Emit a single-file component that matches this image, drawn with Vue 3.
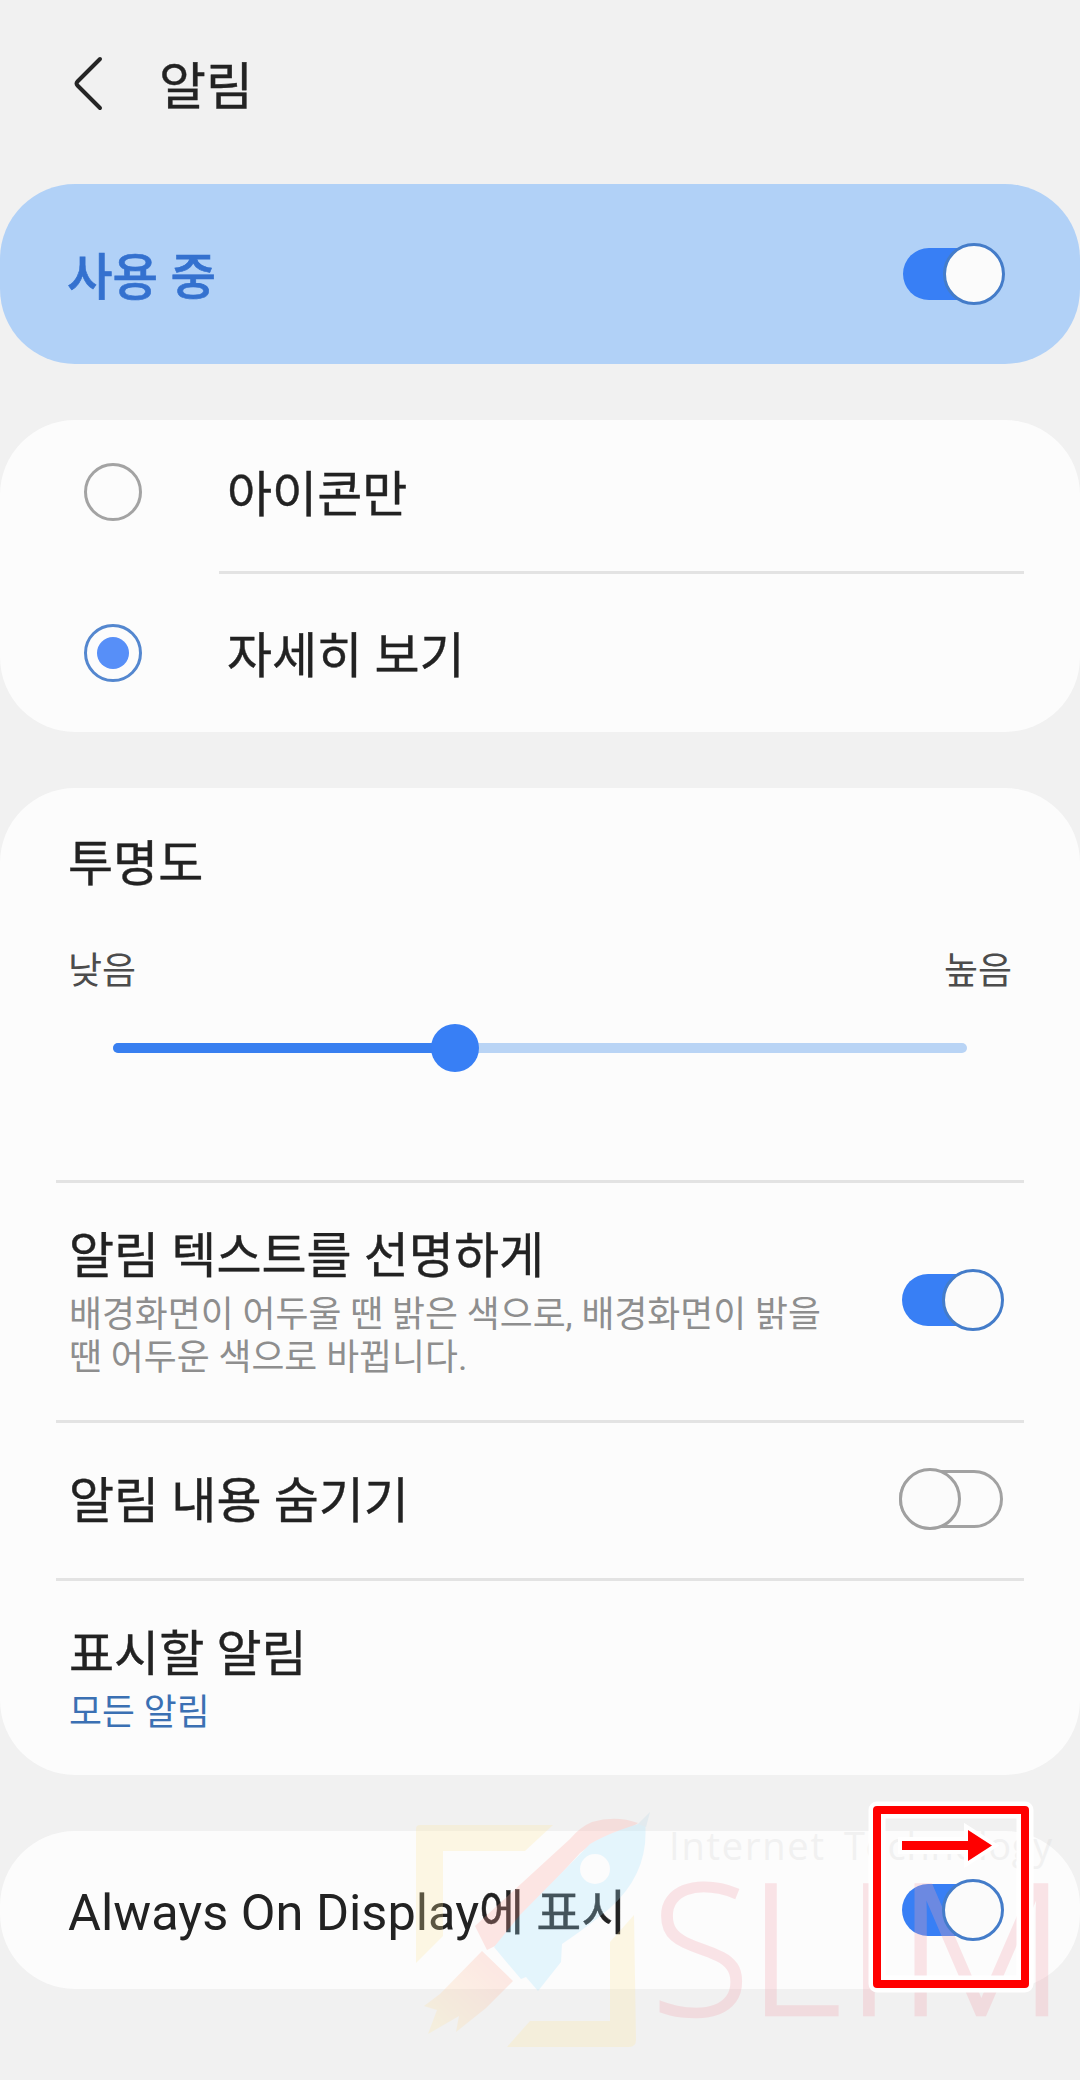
<script setup>
import { ref } from 'vue'

const mode = ref('detail')
const modes = [
  { id: 'icons', label: '아이콘만' },
  { id: 'detail', label: '자세히 보기' },
]
const transparency = ref(40)
</script>

<template>
  <div class="screen">
    <header class="header">
      <svg class="back" viewBox="0 0 34 60" fill="none">
        <path d="M29 6 6.5 28.500q-2 2 0 4L29 55" stroke="#252525" stroke-width="4" stroke-linecap="round" />
      </svg>
      <h1>알림</h1>
    </header>

    <section class="card master">
      <span class="master-label">사용 중</span>
      <span class="switch on"><i></i></span>
    </section>

    <section class="card modes">
      <div v-for="m in modes" :key="m.id" class="mode">
        <span class="radio" :class="{ checked: m.id === mode }"></span>
        <span class="label">{{ m.label }}</span>
      </div>
    </section>

    <section class="card options">
      <div class="transparency">
        <div class="label">투명도</div>
        <div class="range-labels"><span>낮음</span><span>높음</span></div>
        <div class="slider">
          <div class="fill" :style="{ width: transparency + '%' }"><b></b></div>
        </div>
      </div>
      <div class="row clear-text">
        <div class="copy">
          <div class="label">알림 텍스트를 선명하게</div>
          <p>배경화면이 어두울 땐 밝은 색으로, 배경화면이 밝을<br />땐 어두운 색으로 바뀝니다.</p>
        </div>
        <span class="switch on"><i></i></span>
      </div>
      <div class="row hide-content">
        <div class="label">알림 내용 숨기기</div>
        <span class="switch off"><i></i></span>
      </div>
      <div class="row shown">
        <div class="copy">
          <div class="label">표시할 알림</div>
          <p class="value">모든 알림</p>
        </div>
      </div>
    </section>

    <section class="card aod">
      <div class="label"><span class="latin">Always On Display</span>에 표시</div>
      <span class="switch on"><i></i></span>
    </section>

    <svg class="watermark" viewBox="400 1790 680 290">
      <g fill="#ffe8a0" opacity=".26">
        <path d="M420 1825H553L525 1851H443V1936L416 1963V1829q0-4 4-4z" />
        <path d="M634 1915 636 2040q0 7-7 7H507L530 2021H610V1942z" />
      </g>
      <g opacity=".26">
        <path d="M638 1823Q616 1815 592 1822Q580 1827 570 1839L475 1926L487 1950L497 1945L580 1853Q600 1836 625 1832z" fill="#ffa59d" />
        <path fill-rule="evenodd" d="M645 1822Q610 1832 590 1844L520 1915L494 1947Q508 1964 521 1979L526 1977L538 1991L561 1962L562 1944Q590 1925 610 1908Q650 1872 645 1822zM580 1869a15 15 0 1 0 30 0a15 15 0 1 0-30 0z" fill="#a4e2ff" />
        <path d="M638 1824 650 1812 646 1827z" fill="#b8d8e8" />
        <path d="M482 1951 513 1981 486 2008 456 2032 459 2016 428 2034 437 2010 424 2006 440 1994z" fill="url(#flame)" />
      </g>
      <defs>
        <linearGradient id="flame" x1="1" y1="0" x2="0" y2="1">
          <stop offset=".2" stop-color="#ffb09f" />
          <stop offset=".9" stop-color="#ffe9a5" />
        </linearGradient>
      </defs>
      <text class="tagline" y="1860"><tspan x="669" textLength="155">Internet</tspan><tspan x="844" textLength="208">Technology</tspan></text>
      <g class="brand">
        <text y="2015" x="651 748 846">SLI</text>
        <text y="2015" x="896" textLength="171" lengthAdjust="spacingAndGlyphs">M</text>
      </g>
    </svg>

    <svg class="callout" viewBox="0 0 174 198">
      <g fill="none" stroke-linejoin="round">
        <rect x="12" y="12" width="148" height="174" stroke="#fff" stroke-width="17" />
        <rect x="12" y="12" width="148" height="174" stroke="#f00" stroke-width="8" />
      </g>
      <path d="M37 43H103V32L127 47.500 103 63V52H37z" fill="#f00" stroke="#fff" stroke-width="8" paint-order="stroke" />
    </svg>
  </div>
</template>

<style>
body {
  background: #f1f1f1;
}
</style>

<style scoped>
.screen {
  position: relative;
  width: 1080px;
  height: 2080px;
  overflow: hidden;
  background: #f1f1f1;
  color: #222;
  font-family: Roboto, "Noto Sans CJK KR", sans-serif;
}
.header {
  display: flex;
  align-items: center;
  height: 184px;
  padding-left: 71px;
  box-sizing: border-box;
}
.back {
  width: 34px;
  height: 60px;
  margin-top: -19px;
}
h1 {
  margin: -8px 0 0 54px;
  font-size: 51px;
  line-height: 60px;
  font-weight: 400;
  -webkit-text-stroke: 0.4px;
}
.card {
  box-sizing: border-box;
  border-radius: 75px;
  background: #fcfcfc;
}
.label {
  font-size: 49px;
  line-height: 58px;
  white-space: nowrap;
  -webkit-text-stroke: 0.4px;
}
.latin {
  font-size: 50.5px;
  -webkit-text-stroke: 0;
}
.master {
  display: flex;
  align-items: center;
  justify-content: space-between;
  height: 180px;
  padding: 0 75px 0 67px;
  background: #b1d1f7;
}
.master-label {
  padding-top: 8px;
  font-size: 49.5px;
  line-height: 58px;
  font-weight: 500;
  color: #3471cf;
  -webkit-text-stroke: 0.6px;
}
.switch {
  position: relative;
  flex: none;
  display: flex;
  align-items: center;
  justify-content: flex-end;
  width: 102px;
  height: 52px;
  border-radius: 26px;
}
.switch i {
  position: relative;
  z-index: 2;
  box-sizing: border-box;
  flex: none;
  width: 62px;
  height: 62px;
  border: 3px solid #447cc9;
  border-radius: 50%;
  background: #fbfbfb;
}
.switch.on {
  background: linear-gradient(90deg, #387ff5 76px, transparent 76px);
}
.switch.off {
  box-sizing: border-box;
  justify-content: flex-start;
  width: 104px;
  height: 58px;
  border: 3px solid #a2a2a2;
  border-radius: 29px;
}
.switch.off i {
  margin-left: -3px;
  border-color: #a0a0a0;
}
.modes {
  height: 312px;
  margin-top: 56px;
}
.mode {
  display: flex;
  align-items: center;
  height: 151px;
  margin-left: 219px;
  margin-right: 56px;
  box-sizing: border-box;
  padding-bottom: 7px;
}
.mode + .mode {
  height: 161px;
  padding-bottom: 0;
  border-top: 3px solid #e3e3e3;
}
.mode .label {
  margin-left: 85px;
  padding-top: 7px;
}
.mode .radio {
  margin-left: -135px;
}
.radio {
  display: grid;
  place-items: center;
  box-sizing: border-box;
  width: 58px;
  height: 58px;
  border: 3px solid #a3a3a3;
  border-radius: 50%;
}
.radio.checked {
  border-color: #5487cf;
}
.radio.checked::after {
  content: "";
  width: 32px;
  height: 32px;
  border-radius: 50%;
  background: #578ff8;
}
.options {
  height: 987px;
  margin-top: 56px;
  padding: 0 56px;
}
.transparency {
  box-sizing: border-box;
  height: 392px;
  padding: 48px 12px 0;
}
.range-labels {
  display: flex;
  justify-content: space-between;
  margin-top: 56px;
  font-size: 37px;
  line-height: 44px;
  color: #4c4c4c;
}
.slider {
  height: 10px;
  margin: 49px 45px 0;
  border-radius: 5px;
  background: #b9d4f5;
}
.fill {
  display: flex;
  align-items: center;
  justify-content: flex-end;
  height: 10px;
  border-radius: 5px;
  background: #387ff0;
}
.fill b {
  flex: none;
  width: 48px;
  height: 48px;
  margin-right: -24px;
  border-radius: 50%;
  background: #387ff5;
}
.row {
  display: flex;
  align-items: center;
  justify-content: space-between;
  box-sizing: border-box;
  padding: 0 20px 0 13px;
  border-top: 3px solid #e3e3e3;
}
.clear-text {
  height: 240px;
}
.clear-text .switch,
.hide-content .switch {
  margin-bottom: 4px;
}
.hide-content {
  height: 158px;
  padding-right: 21px;
}
.hide-content .label {
  padding-top: 3px;
}
.shown {
  height: 197px;
}
.copy {
  padding-top: 4px;
}
.copy p {
  margin: 8px 0 0;
  font-size: 35.8px;
  line-height: 43px;
  color: #8e8e8e;
  white-space: nowrap;
}
.copy .value {
  color: #3b70b3;
}
.aod {
  display: flex;
  align-items: center;
  justify-content: space-between;
  height: 158px;
  margin-top: 56px;
  padding: 0 76px 0 68px;
}
.aod .label {
  padding-top: 6px;
}
.watermark {
  position: absolute;
  z-index: 1;
  left: 400px;
  top: 1790px;
  width: 680px;
  height: 290px;
}
.tagline {
  font: 400 38px "Open Sans", sans-serif;
  fill: #d4d4d4;
  opacity: 0.27;
}
.brand {
  font: 300 182px "Open Sans", sans-serif;
  fill: #f3a5b0;
  stroke: #f3a5b0;
  stroke-width: 2.5px;
  opacity: 0.28;
}
.callout {
  position: absolute;
  z-index: 3;
  left: 865px;
  top: 1798px;
  width: 174px;
  height: 198px;
}
</style>
